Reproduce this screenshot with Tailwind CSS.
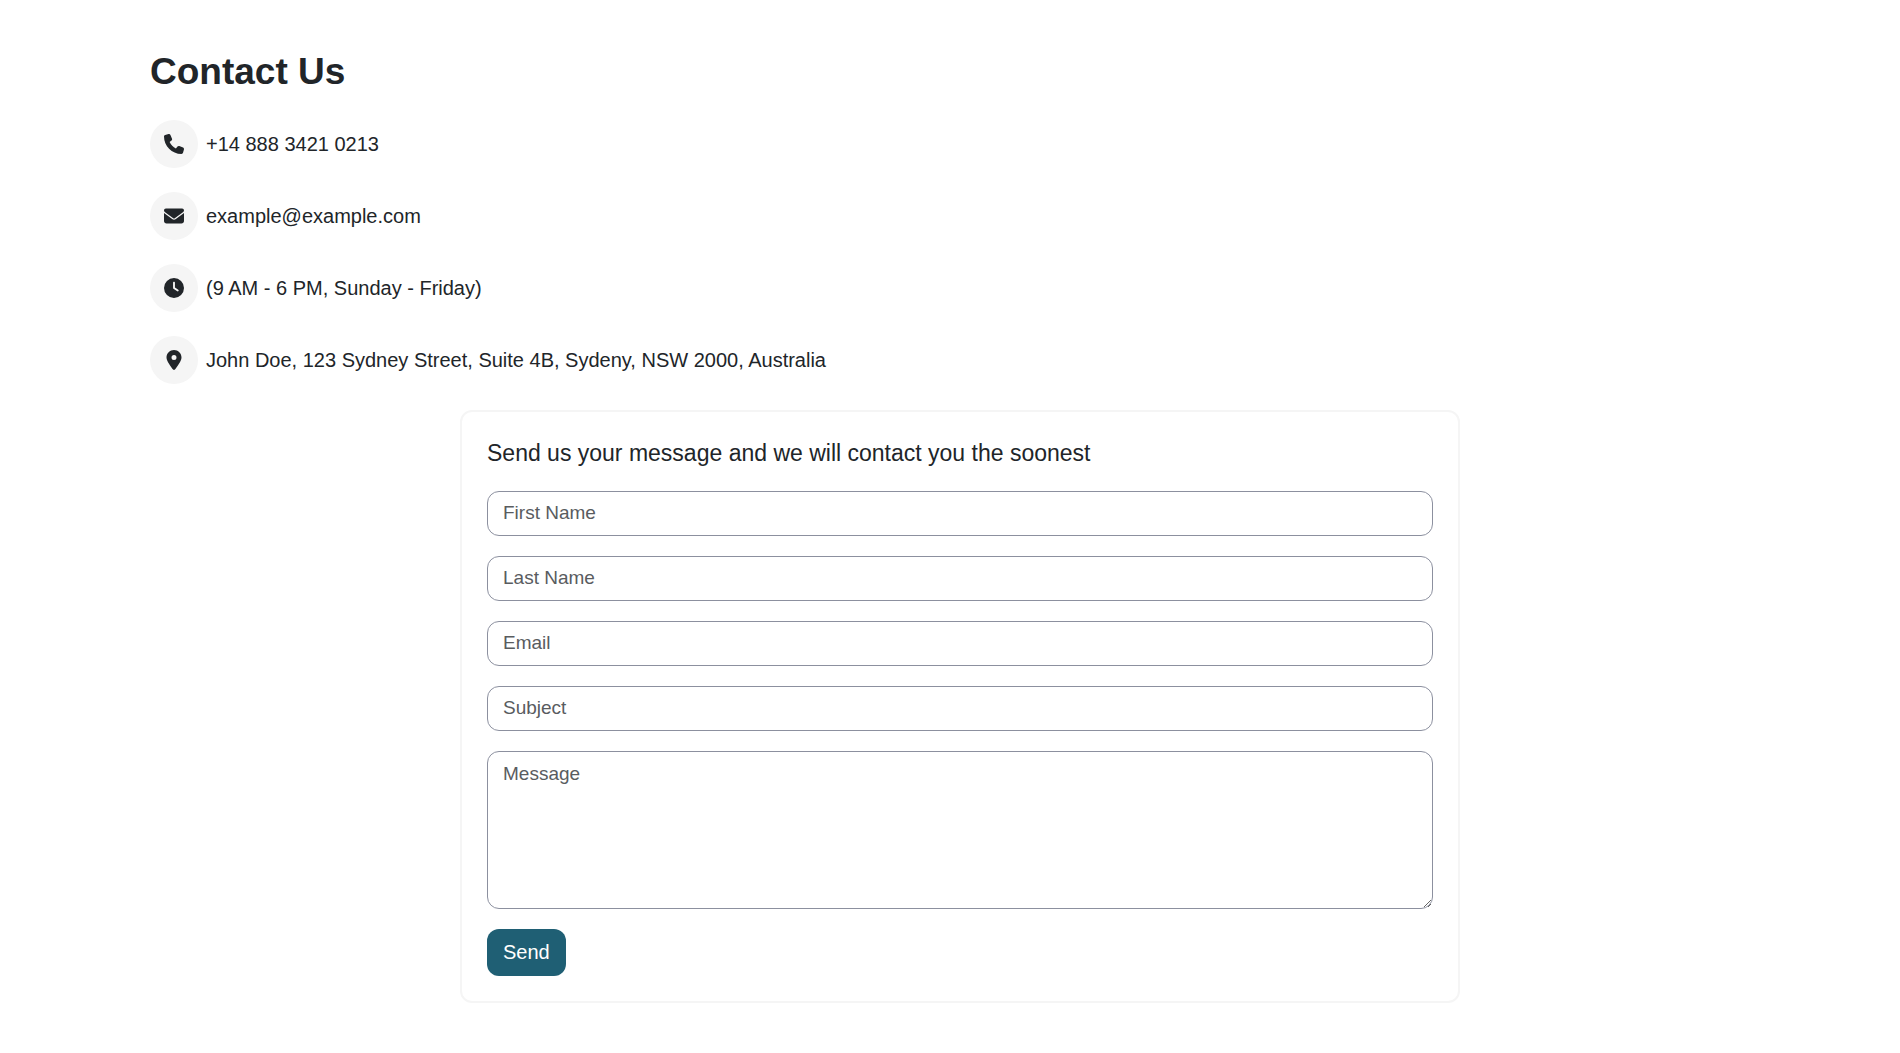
<!DOCTYPE html>
<html lang="en">
<head>
  <meta charset="UTF-8" />
  <meta name="viewport" content="width=device-width, initial-scale=1.0"/>
  <title>Contact Us</title>
  <script src="https://cdn.jsdelivr.net/npm/@tailwindcss/browser@4"></script>
</head>
<body class="bg-white text-[#212529] text-xl font-['Liberation_Sans',Arial,sans-serif]">
  <main class="pl-[150px] pr-[130px] py-12">
    <h1 class="text-[37px] leading-12 font-bold mb-6">Contact Us</h1>

    <ul class="flex flex-col gap-6">
      <li class="flex items-center gap-2">
        <span class="size-12 rounded-full bg-[#f5f5f5] flex items-center justify-center">
          <svg class="size-5" viewBox="0 0 512 512" fill="currentColor" aria-hidden="true"><path d="M164.900 24.600c-7.700-18.600-28-28.500-47.400-23.200l-88 24C12.100 30.200 0 46 0 64C0 311.400 200.600 512 448 512c18 0 33.800-12.100 38.600-29.500l24-88c5.300-19.400-4.600-39.700-23.200-47.400l-96-40c-16.300-6.800-35.200-2.100-46.300 11.600L304.700 368C234.300 334.700 177.300 277.700 144 207.300L193.300 167c13.700-11.200 18.400-30 11.600-46.300l-40-96z"/></svg>
        </span>
        <span>+14 888 3421 0213</span>
      </li>
      <li class="flex items-center gap-2">
        <span class="size-12 rounded-full bg-[#f5f5f5] flex items-center justify-center">
          <svg class="size-5" viewBox="0 0 512 512" fill="currentColor" aria-hidden="true"><path d="M48 64C21.500 64 0 85.500 0 112c0 15.100 7.100 29.300 19.200 38.400L236.800 313.600c11.400 8.500 27 8.500 38.400 0L492.800 150.400c12.100-9.100 19.200-23.300 19.200-38.400c0-26.500-21.500-48-48-48L48 64zM0 176L0 384c0 35.300 28.700 64 64 64l384 0c35.300 0 64-28.700 64-64l0-208L294.400 339.200c-22.800 17.100-54 17.100-76.800 0L0 176z"/></svg>
        </span>
        <span>example@example.com</span>
      </li>
      <li class="flex items-center gap-2">
        <span class="size-12 rounded-full bg-[#f5f5f5] flex items-center justify-center">
          <svg class="size-5" viewBox="0 0 512 512" fill="currentColor" aria-hidden="true"><path d="M256 0a256 256 0 1 1 0 512A256 256 0 1 1 256 0zM232 120l0 136c0 8 4 15.500 10.700 20l96 64c11 7.400 25.900 4.400 33.300-6.700s4.400-25.900-6.700-33.300L280 243.200 280 120c0-13.300-10.700-24-24-24s-24 10.700-24 24z"/></svg>
        </span>
        <span>(9 AM - 6 PM, Sunday - Friday)</span>
      </li>
      <li class="flex items-center gap-2">
        <span class="size-12 rounded-full bg-[#f5f5f5] flex items-center justify-center">
          <svg class="size-5" viewBox="0 0 384 512" fill="currentColor" aria-hidden="true"><path d="M215.700 499.200C267 435 384 279.400 384 192C384 86 298 0 192 0S0 86 0 192c0 87.400 117 243 168.300 307.200c12.300 15.300 35.100 15.300 47.400 0zM192 128a64 64 0 1 1 0 128 64 64 0 1 1 0-128z"/></svg>
        </span>
        <span>John Doe, 123 Sydney Street, Suite 4B, Sydeny, NSW 2000, Australia</span>
      </li>
    </ul>

    <form class="max-w-[1000px] mx-auto mt-[26px] p-[25px] border-2 border-[#f5f5f5] rounded-xl">
      <h2 class="text-[23px] leading-8 mb-[22px]">Send us your message and we will contact you the soonest</h2>
      <div class="flex flex-col items-start gap-5">
        <input type="text" name="first_name" aria-label="First Name" placeholder="First Name" class="w-full h-[45px] px-[15px] pb-0.5 text-[19px] border border-[#8c909f] rounded-xl placeholder:text-[#595c5f]" />
        <input type="text" name="last_name" aria-label="Last Name" placeholder="Last Name" class="w-full h-[45px] px-[15px] pb-0.5 text-[19px] border border-[#8c909f] rounded-xl placeholder:text-[#595c5f]" />
        <input type="email" name="email" aria-label="Email" placeholder="Email" class="w-full h-[45px] px-[15px] pb-0.5 text-[19px] border border-[#8c909f] rounded-xl placeholder:text-[#595c5f]" />
        <input type="text" name="subject" aria-label="Subject" placeholder="Subject" class="w-full h-[45px] px-[15px] pb-0.5 text-[19px] border border-[#8c909f] rounded-xl placeholder:text-[#595c5f]" />
        <textarea name="message" rows="5" aria-label="Message" placeholder="Message" class="w-full px-[15px] py-2 text-[19px] leading-7 border border-[#8c909f] rounded-xl placeholder:text-[#595c5f]"></textarea>
        <button type="submit" class="bg-[#1f5f74] text-white px-4 py-[9px] leading-[29px] rounded-xl">Send</button>
      </div>
    </form>
  </main>
</body>
</html>
